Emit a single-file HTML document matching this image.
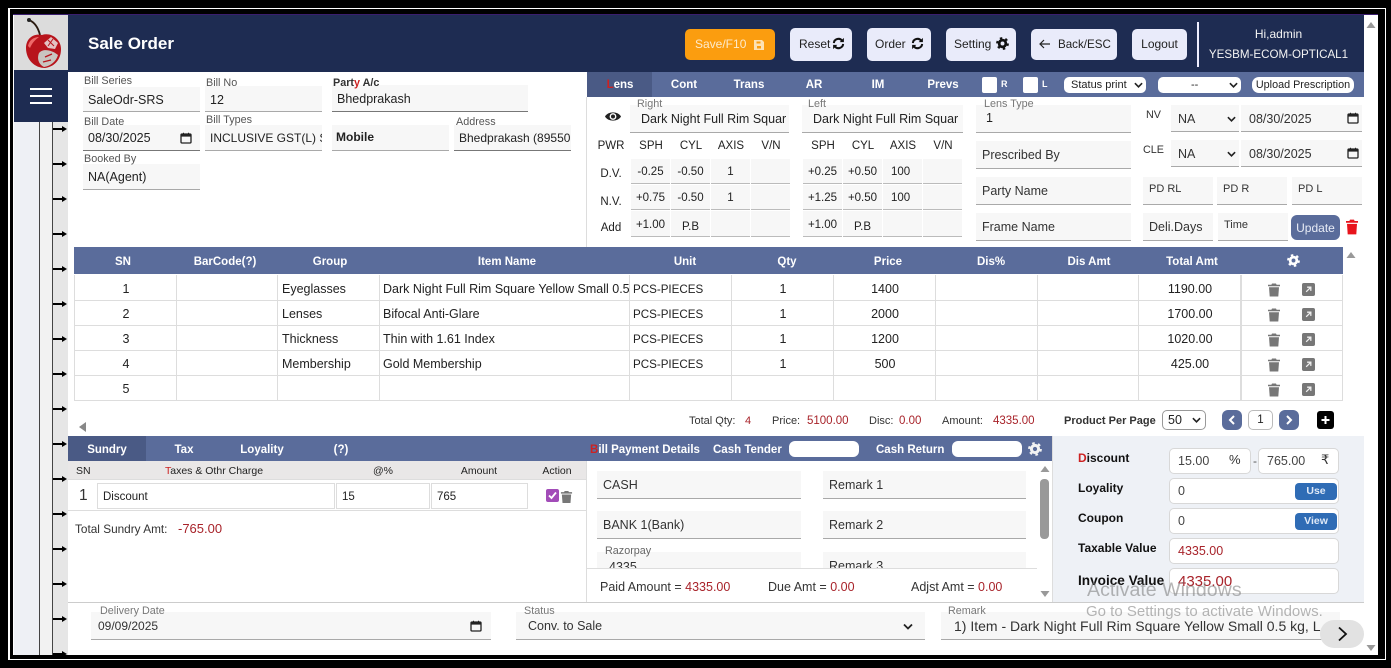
<!DOCTYPE html>
<html><head><meta charset="utf-8"><title>Sale Order</title>
<style>
html,body{margin:0;padding:0;background:#000;width:1391px;height:668px;overflow:hidden}
body{position:relative;font-family:"Liberation Sans",sans-serif;font-size:12.5px;color:#222}
div,span.a,svg.a{position:absolute}
.t{white-space:nowrap}
.f{background:#f7f7f7;border-bottom:1px solid #a9a9a9;box-sizing:border-box;white-space:nowrap;overflow:hidden;line-height:25px;padding-left:5px;padding-top:1px;font-size:12.5px;color:#222}
.l{font-size:10.8px;color:#555;white-space:nowrap;line-height:12px;z-index:2;margin-top:1px}
.h{color:#fff;font-weight:bold;font-size:11.5px;white-space:nowrap;line-height:14px;text-align:center;margin-top:1px}
.c{text-align:center;font-size:11.5px;white-space:nowrap;line-height:24px;padding-top:1px;background:#f7f7f7;border-bottom:1px solid #bbb;box-sizing:border-box}
.s{white-space:nowrap;font-size:11.5px;line-height:14px;text-align:center;color:#222;margin-top:1px}
.r{color:#a8232a}
.ar{left:53px;width:12px;height:2px;background:#000}
.ar:after{content:"";position:absolute;right:-2px;top:-2px;border-left:5px solid #000;border-top:3px solid transparent;border-bottom:3px solid transparent}
.btn{background:#e9ebfa;border-radius:5px;color:#222;font-size:12px;white-space:nowrap;text-align:center}
.td{font-size:12.5px;white-space:nowrap;line-height:25px;height:25px;overflow:hidden;margin-top:1px}
.ctr{text-align:center}
.vl{width:1px;background:#ddd;top:275px;height:125px}
.hl{height:1px;background:#ddd;left:74px;width:1269px}
.b{font-weight:bold;color:#111;font-size:12px;white-space:nowrap;line-height:14px}
.box{background:#fff;border:1px solid #d8d8d8;border-radius:5px;box-sizing:border-box;white-space:nowrap;padding-left:8px;font-size:12.5px;line-height:25px;color:#444}
.tq{font-size:11px;line-height:14px;color:#333;top:414px}
.sh{font-size:10.5px;line-height:13px;color:#222;top:465px;white-space:nowrap}
</style></head><body>
<svg width="0" height="0" style="position:absolute"><defs>
<symbol id="gear" viewBox="0 0 14 14"><circle cx="7" cy="7" r="3.6" fill="none" stroke="currentColor" stroke-width="3"/><circle cx="7" cy="7" r="5.8" fill="none" stroke="currentColor" stroke-width="2.2" stroke-dasharray="2.6 3.47"/></symbol>
<symbol id="trash" viewBox="0 0 14 14"><path fill="currentColor" d="M5 0.5h4l.6 1.2H13v1.6H1V1.700h3.400zM2 4.300h10l-.7 9.200H2.700z"/></symbol>
<symbol id="open" viewBox="0 0 14 14"><rect width="14" height="14" rx="2" fill="#777"/><path d="M4.500 9.500L9.500 4.500M5.500 4.500h4v4" fill="none" stroke="#eee" stroke-width="1.400"/></symbol>
<symbol id="sync" viewBox="0 0 14 14"><path d="M2 6.500A5 5 0 0 1 11 4M12 7.500A5 5 0 0 1 3 10" fill="none" stroke="currentColor" stroke-width="2.200"/><path fill="currentColor" d="M12.800 1v4.500H8.300zM1.200 13V8.500h4.500z"/></symbol>
<symbol id="cal" viewBox="0 0 12 12"><rect x="1" y="2" width="10" height="9" rx="1" fill="none" stroke="#222" stroke-width="1.300"/><rect x="1" y="2" width="10" height="2.600" fill="#222"/><path d="M3.500 .8v2M8.500 .8v2" stroke="#222"/></symbol>
<symbol id="chev" viewBox="0 0 10 6"><path d="M1 1l4 4 4-4" fill="none" stroke="#222" stroke-width="1.800"/></symbol>
</defs></svg>

<!-- outer frame -->
<div style="left:8px;top:8px;width:1375px;height:650px;border:1px solid #fff;border-left-width:2px;box-sizing:content-box"></div>
<div style="left:13px;top:14px;width:1365px;height:641px;background:#fff;overflow:hidden"></div>
<div style="left:13px;top:14px;width:1365px;height:1px;background:#3a1d6e"></div>

<!-- sidebar -->
<div style="left:14px;top:122px;width:25px;height:533px;background:#eef0f5"></div>
<div style="left:39px;top:122px;width:1px;height:533px;background:#444"></div>
<div style="left:40px;top:122px;width:12px;height:533px;background:#f2f2f2"></div>
<div style="left:52px;top:122px;width:1px;height:533px;background:#444"></div>
<div style="left:53px;top:122px;width:15px;height:533px;background:#e6e6e6"></div>
<div class="ar" style="top:128px"></div><div class="ar" style="top:163px"></div><div class="ar" style="top:198px"></div><div class="ar" style="top:233px"></div><div class="ar" style="top:268px"></div><div class="ar" style="top:303px"></div><div class="ar" style="top:338px"></div><div class="ar" style="top:373px"></div><div class="ar" style="top:408px"></div><div class="ar" style="top:443px"></div><div class="ar" style="top:478px"></div><div class="ar" style="top:513px"></div><div class="ar" style="top:548px"></div><div class="ar" style="top:583px"></div><div class="ar" style="top:618px"></div><div class="ar" style="top:653px"></div>

<!-- logo -->
<div style="left:14px;top:15px;width:54px;height:55px;background:#dcdcdc"></div>
<svg class="a" style="left:14px;top:15px" width="54" height="55" viewBox="0 0 54 55">
<path d="M15 5C20 7 24 12 26 20" fill="none" stroke="#2a1a10" stroke-width="1.800"/><circle cx="15" cy="5" r="2" fill="#222"/>
<path d="M12 33C12 23 20 18 28 20C37 17 47 24 47 34C47 46 39 52 31 53C21 53 12 45 12 33Z" fill="#b8141c"/>
<path d="M14 31C15 25 20 22 25 22C21 25 18 28 16 33Z" fill="#ee6a6a"/>
<path d="M25 38C29 33 38 35 44 40C42 47 36 51 30 52C24 49 23 43 25 38Z" fill="#c9c4c0"/>
<path d="M30 28L37 22L44 28L41 34L34 33Z" fill="#e3c2c2"/>
<path d="M34 25l6 6M39 24l-5 7" stroke="#b8141c" stroke-width="1"/>
<path d="M31 42l7-3M29 47l8-2" stroke="#b8141c" stroke-width="1.300"/>
</svg>
<!-- menu -->
<div style="left:14px;top:70px;width:54px;height:52px;background:#1e2c52"></div>
<div style="left:30px;top:88px;width:22px;height:2px;background:#fff"></div>
<div style="left:30px;top:95px;width:22px;height:2px;background:#fff"></div>
<div style="left:30px;top:102px;width:22px;height:2px;background:#fff"></div>

<!-- header -->
<div style="left:68px;top:15px;width:1296px;height:57px;background:#1e2c52"></div>
<div class="t" style="left:88px;top:34px;color:#fff;font-weight:bold;font-size:17px;line-height:20px">Sale Order</div>
<div class="btn" style="left:685px;top:29px;width:90px;height:31px;line-height:31px;background:#fb9d0f;color:#fdeacb;text-align:left;padding-left:10px;box-sizing:border-box">Save/F10</div>
<svg class="a" style="left:753px;top:39px" width="12" height="12" viewBox="0 0 12 12"><path fill="#fde2b5" d="M1 1h8l2 2v8H1zM3.500 2.500v2h4v-2zM4 7v2.500h4V7z"/></svg>
<div class="btn" style="left:790px;top:28px;width:62px;height:33px;line-height:33px;text-align:left;padding-left:9px;box-sizing:border-box">Reset</div>
<svg class="a" style="left:832px;top:37px;color:#111" width="13" height="13"><use href="#sync"/></svg>
<div class="btn" style="left:867px;top:28px;width:64px;height:33px;line-height:33px;text-align:left;padding-left:8px;box-sizing:border-box">Order</div>
<svg class="a" style="left:911px;top:37px;color:#111" width="13" height="13"><use href="#sync"/></svg>
<div class="btn" style="left:946px;top:28px;width:70px;height:33px;line-height:33px;text-align:left;padding-left:8px;box-sizing:border-box">Setting</div>
<svg class="a" style="left:996px;top:37px;color:#111" width="13" height="13"><use href="#gear"/></svg>
<div class="btn" style="left:1031px;top:29px;width:86px;height:31px;line-height:31px;text-align:left;padding-left:27px;box-sizing:border-box;font-size:11.6px">Back/ESC</div>
<svg class="a" style="left:1038px;top:39px" width="13" height="10" viewBox="0 0 13 10"><path d="M12 5H2M6 1L2 5l4 4" fill="none" stroke="#222" stroke-width="1.200"/></svg>
<div class="btn" style="left:1132px;top:29px;width:55px;height:31px;line-height:31px">Logout</div>
<div style="left:1197px;top:22px;width:2px;height:45px;background:#eef"></div>
<div class="t" style="left:1196px;top:27px;width:165px;text-align:center;color:#f3f3f3;font-size:12px;line-height:14px">Hi,admin</div>
<div class="t" style="left:1196px;top:48px;width:165px;text-align:center;color:#f3f3f3;font-size:11.6px;line-height:14px">YESBM-ECOM-OPTICAL1</div>
<svg class="a" style="left:1366px;top:21px" width="10" height="8"><path d="M5 1L9.500 7H.5z" fill="#999"/></svg>
<svg class="a" style="left:1366px;top:644px" width="10" height="8"><path d="M5 7L9.500 1H.5z" fill="#999"/></svg>

<!-- left top fields -->
<div class="l" style="left:84px;top:74px">Bill Series</div>
<div class="f" style="left:83px;top:87px;width:117px;height:25px">SaleOdr-SRS</div>
<div class="l" style="left:206px;top:76px">Bill No</div>
<div class="f" style="left:205px;top:86px;width:117px;height:26px;line-height:26px">12</div>
<div class="l" style="left:333px;top:76px;font-weight:bold;color:#333">Part<span style="color:#c22">y</span> A/c</div>
<div class="f" style="left:332px;top:85px;width:196px;height:27px;border-bottom-color:#777;line-height:26px">Bhedprakash</div>
<div class="l" style="left:84px;top:115px">Bill Date</div>
<div class="f" style="left:83px;top:125px;width:117px;height:26px;border-bottom-color:#777">08/30/2025</div>
<svg class="a" style="left:180px;top:132px" width="12" height="12"><use href="#cal"/></svg>
<div class="l" style="left:206px;top:113px">Bill Types</div>
<div class="f" style="left:205px;top:125px;width:117px;height:26px;padding-right:4px;font-size:12px">INCLUSIVE GST(L) S</div>
<div class="f" style="left:332px;top:125px;width:117px;height:26px;font-weight:bold;font-size:12px;padding-left:4px;padding-top:0">Mobile</div>
<div class="l" style="left:456px;top:115px">Address</div>
<div class="f" style="left:454px;top:125px;width:117px;height:26px;border-bottom-color:#777;font-size:12px;padding-right:5px">Bhedprakash (89550</div>
<div class="l" style="left:84px;top:152px">Booked By</div>
<div class="f" style="left:83px;top:164px;width:117px;height:26px">NA(Agent)</div>

<!-- lens panel -->
<div style="left:587px;top:72px;width:777px;height:25px;background:#5a6c9b"></div>
<div style="left:587px;top:72px;width:65px;height:25px;background:#4a5a85"></div>
<div style="left:586px;top:97px;width:1px;height:150px;background:#ddd"></div>
<div class="h" style="left:600px;top:77px;width:40px"><span style="color:#c22">L</span>ens</div>
<div class="h" style="left:664px;top:77px;width:40px">Cont</div>
<div class="h" style="left:729px;top:77px;width:40px">Trans</div>
<div class="h" style="left:794px;top:77px;width:40px">AR</div>
<div class="h" style="left:858px;top:77px;width:40px">IM</div>
<div class="h" style="left:923px;top:77px;width:40px">Prevs</div>
<div style="left:982px;top:77px;width:15px;height:16px;background:#fff;border-radius:2px"></div>
<div class="h" style="left:1001px;top:76px;font-size:9px">R</div>
<div style="left:1023px;top:77px;width:15px;height:16px;background:#fff;border-radius:2px"></div>
<div class="h" style="left:1042px;top:76px;font-size:9px">L</div>
<div style="left:1064px;top:77px;width:82px;height:16px;background:#fff;border-radius:5px"></div>
<div class="t" style="left:1071px;top:78px;font-size:11px;line-height:14px">Status print</div>
<svg class="a" style="left:1134px;top:82px" width="9" height="6"><use href="#chev"/></svg>
<div style="left:1158px;top:77px;width:83px;height:16px;background:#fff;border-radius:5px"></div>
<div class="t" style="left:1191px;top:78px;font-size:11px;line-height:14px">--</div>
<svg class="a" style="left:1229px;top:82px" width="9" height="6"><use href="#chev"/></svg>
<div class="t" style="left:1252px;top:77px;width:102px;height:16px;background:#fff;border-radius:7px;font-size:10.8px;line-height:16px;text-align:center">Upload Prescription</div>

<svg class="a" style="left:604px;top:109px" width="18" height="15" viewBox="0 0 18 15"><path d="M1 7.500C4 2 14 2 17 7.500C14 13 4 13 1 7.500Z" fill="#222"/><circle cx="9" cy="7.500" r="3.400" fill="#fff"/><circle cx="9" cy="7.500" r="2" fill="#222"/></svg>
<div class="l" style="left:637px;top:97px;color:#777">Right</div>
<div class="f" style="left:630px;top:105px;width:159px;height:28px;line-height:26px;padding-left:11px;background:#f8f8f8">Dark Night Full Rim Squar</div>
<div class="l" style="left:808px;top:97px;color:#777">Left</div>
<div class="f" style="left:802px;top:105px;width:161px;height:28px;line-height:26px;padding-left:11px;background:#f8f8f8">Dark Night Full Rim Squar</div>

<div class="s" style="left:591px;top:138px;width:40px">PWR</div>
<div class="s" style="left:631px;top:138px;width:40px">SPH</div>
<div class="s" style="left:671px;top:138px;width:40px">CYL</div>
<div class="s" style="left:711px;top:138px;width:40px">AXIS</div>
<div class="s" style="left:751px;top:138px;width:40px">V/N</div>
<div class="s" style="left:803px;top:138px;width:40px">SPH</div>
<div class="s" style="left:843px;top:138px;width:40px">CYL</div>
<div class="s" style="left:883px;top:138px;width:40px">AXIS</div>
<div class="s" style="left:923px;top:138px;width:40px">V/N</div>
<div class="s" style="left:591px;top:166px;width:40px">D.V.</div>
<div class="s" style="left:591px;top:194px;width:40px">N.V.</div>
<div class="s" style="left:591px;top:220px;width:40px">Add</div>

<div class="c" style="left:631px;top:159px;width:39px;height:25px">-0.25</div>
<div class="c" style="left:671px;top:159px;width:39px;height:25px">-0.50</div>
<div class="c" style="left:711px;top:159px;width:39px;height:25px">1</div>
<div class="c" style="left:751px;top:159px;width:39px;height:25px"></div>
<div class="c" style="left:631px;top:185px;width:39px;height:25px">+0.75</div>
<div class="c" style="left:671px;top:185px;width:39px;height:25px">-0.50</div>
<div class="c" style="left:711px;top:185px;width:39px;height:25px">1</div>
<div class="c" style="left:751px;top:185px;width:39px;height:25px"></div>
<div class="c" style="left:631px;top:211px;width:39px;height:26px;line-height:26px">+1.00</div>
<div class="c" style="left:671px;top:211px;width:39px;height:26px;line-height:30px">P.B</div>
<div class="c" style="left:711px;top:211px;width:39px;height:26px"></div>
<div class="c" style="left:751px;top:211px;width:39px;height:26px"></div>
<div class="c" style="left:803px;top:159px;width:39px;height:25px">+0.25</div>
<div class="c" style="left:843px;top:159px;width:39px;height:25px">+0.50</div>
<div class="c" style="left:883px;top:159px;width:39px;height:25px;text-align:left;padding-left:8px">100</div>
<div class="c" style="left:923px;top:159px;width:39px;height:25px"></div>
<div class="c" style="left:803px;top:185px;width:39px;height:25px">+1.25</div>
<div class="c" style="left:843px;top:185px;width:39px;height:25px">+0.50</div>
<div class="c" style="left:883px;top:185px;width:39px;height:25px;text-align:left;padding-left:8px">100</div>
<div class="c" style="left:923px;top:185px;width:39px;height:25px"></div>
<div class="c" style="left:803px;top:211px;width:39px;height:26px;line-height:26px">+1.00</div>
<div class="c" style="left:843px;top:211px;width:39px;height:26px;line-height:30px">P.B</div>
<div class="c" style="left:883px;top:211px;width:39px;height:26px"></div>
<div class="c" style="left:923px;top:211px;width:39px;height:26px"></div>

<div class="l" style="left:984px;top:97px;color:#777">Lens Type</div>
<div class="f" style="left:976px;top:105px;width:155px;height:28px;line-height:25px;padding-left:10px">1</div>
<div class="f" style="left:976px;top:141px;width:155px;height:28px;line-height:27px;padding-left:6px;color:#333">Prescribed By</div>
<div class="f" style="left:976px;top:177px;width:155px;height:28px;line-height:27px;padding-left:6px;color:#333">Party Name</div>
<div class="f" style="left:976px;top:213px;width:155px;height:28px;line-height:27px;padding-left:6px;color:#333">Frame Name</div>
<div class="l" style="left:1146px;top:108px;color:#333">NV</div>
<div class="l" style="left:1143px;top:143px;color:#333">CLE</div>
<div class="f" style="left:1171px;top:105px;width:68px;height:27px;padding-left:7px;line-height:26px;color:#333">NA</div>
<svg class="a" style="left:1227px;top:116px" width="9" height="6"><use href="#chev"/></svg>
<div class="f" style="left:1241px;top:105px;width:121px;height:27px;padding-left:8px;line-height:26px;color:#333">08/30/2025</div>
<svg class="a" style="left:1347px;top:112px" width="12" height="12"><use href="#cal"/></svg>
<div class="f" style="left:1171px;top:140px;width:68px;height:27px;padding-left:7px;line-height:26px;color:#333">NA</div>
<svg class="a" style="left:1227px;top:151px" width="9" height="6"><use href="#chev"/></svg>
<div class="f" style="left:1241px;top:140px;width:121px;height:27px;padding-left:8px;line-height:26px;color:#333">08/30/2025</div>
<svg class="a" style="left:1347px;top:147px" width="12" height="12"><use href="#cal"/></svg>
<div class="f" style="left:1143px;top:177px;width:70px;height:28px;font-size:11px;line-height:23px;padding-left:6px;color:#333">PD RL</div>
<div class="f" style="left:1217px;top:177px;width:70px;height:28px;font-size:11px;line-height:23px;padding-left:6px;color:#333">PD R</div>
<div class="f" style="left:1292px;top:177px;width:70px;height:28px;font-size:11px;line-height:23px;padding-left:6px;color:#333">PD L</div>
<div class="f" style="left:1143px;top:213px;width:70px;height:28px;line-height:27px;padding-left:6px;color:#333">Deli.Days</div>
<div class="f" style="left:1218px;top:213px;width:70px;height:28px;font-size:11px;line-height:23px;padding-left:6px;color:#333">Time</div>
<div class="t" style="left:1291px;top:215px;width:49px;height:25px;background:#5a6c9b;border-radius:6px;color:#e8ecf6;font-size:12px;line-height:26px;text-align:center">Update</div>
<svg class="a" style="left:1345px;top:219px;color:#e8141c" width="14" height="16" viewBox="0 0 14 14" preserveAspectRatio="none"><use href="#trash"/></svg>

<!-- table -->
<div style="left:74px;top:247px;width:1269px;height:27px;background:#5a6c9b"></div>
<div class="h" style="left:83px;top:254px;width:80px">SN</div>
<div class="h" style="left:185px;top:254px;width:80px">BarCode(?)</div>
<div class="h" style="left:290px;top:254px;width:80px">Group</div>
<div class="h" style="left:467px;top:254px;width:80px">Item Name</div>
<div class="h" style="left:645px;top:254px;width:80px">Unit</div>
<div class="h" style="left:747px;top:254px;width:80px">Qty</div>
<div class="h" style="left:848px;top:254px;width:80px">Price</div>
<div class="h" style="left:951px;top:254px;width:80px">Dis%</div>
<div class="h" style="left:1049px;top:254px;width:80px">Dis Amt</div>
<div class="h" style="left:1152px;top:254px;width:80px">Total Amt</div>
<svg class="a" style="left:1287px;top:254px;color:#fff" width="13" height="13"><use href="#gear"/></svg>
<svg class="a" style="left:1346px;top:251px" width="10" height="8"><path d="M5 1L9.500 7H.5z" fill="#999"/></svg>

<div class="hl" style="top:300px"></div><div class="hl" style="top:325px"></div><div class="hl" style="top:350px"></div><div class="hl" style="top:375px"></div><div class="hl" style="top:400px"></div>
<div class="vl" style="left:74px"></div><div class="vl" style="left:176px"></div><div class="vl" style="left:277px"></div><div class="vl" style="left:379px"></div><div class="vl" style="left:629px"></div><div class="vl" style="left:731px"></div><div class="vl" style="left:833px"></div><div class="vl" style="left:935px"></div><div class="vl" style="left:1037px"></div><div class="vl" style="left:1138px"></div><div class="vl" style="left:1240px;width:2px"></div><div class="vl" style="left:1342px"></div>

<div class="td ctr" style="left:86px;top:276px;width:80px">1</div>
<div class="td ctr" style="left:86px;top:301px;width:80px">2</div>
<div class="td ctr" style="left:86px;top:326px;width:80px">3</div>
<div class="td ctr" style="left:86px;top:351px;width:80px">4</div>
<div class="td ctr" style="left:86px;top:376px;width:80px">5</div>
<div class="td" style="left:282px;top:276px">Eyeglasses</div>
<div class="td" style="left:282px;top:301px">Lenses</div>
<div class="td" style="left:282px;top:326px">Thickness</div>
<div class="td" style="left:282px;top:351px">Membership</div>
<div class="td" style="left:383px;top:276px;width:246px">Dark Night Full Rim Square Yellow Small 0.5 kg</div>
<div class="td" style="left:383px;top:301px">Bifocal Anti-Glare</div>
<div class="td" style="left:383px;top:326px">Thin with 1.61 Index</div>
<div class="td" style="left:383px;top:351px">Gold Membership</div>
<div class="td" style="left:633px;top:276px;font-size:11.6px">PCS-PIECES</div>
<div class="td" style="left:633px;top:301px;font-size:11.6px">PCS-PIECES</div>
<div class="td" style="left:633px;top:326px;font-size:11.6px">PCS-PIECES</div>
<div class="td" style="left:633px;top:351px;font-size:11.6px">PCS-PIECES</div>
<div class="td ctr" style="left:763px;top:276px;width:40px">1</div>
<div class="td ctr" style="left:763px;top:301px;width:40px">1</div>
<div class="td ctr" style="left:763px;top:326px;width:40px">1</div>
<div class="td ctr" style="left:763px;top:351px;width:40px">1</div>
<div class="td ctr" style="left:860px;top:276px;width:50px">1400</div>
<div class="td ctr" style="left:860px;top:301px;width:50px">2000</div>
<div class="td ctr" style="left:860px;top:326px;width:50px">1200</div>
<div class="td ctr" style="left:860px;top:351px;width:50px">500</div>
<div class="td ctr" style="left:1160px;top:276px;width:60px">1190.00</div>
<div class="td ctr" style="left:1160px;top:301px;width:60px">1700.00</div>
<div class="td ctr" style="left:1160px;top:326px;width:60px">1020.00</div>
<div class="td ctr" style="left:1160px;top:351px;width:60px">425.00</div>

<svg class="a" style="left:1267px;top:283px;color:#777" width="14" height="14"><use href="#trash"/></svg>
<svg class="a" style="left:1267px;top:308px;color:#777" width="14" height="14"><use href="#trash"/></svg>
<svg class="a" style="left:1267px;top:333px;color:#777" width="14" height="14"><use href="#trash"/></svg>
<svg class="a" style="left:1267px;top:358px;color:#777" width="14" height="14"><use href="#trash"/></svg>
<svg class="a" style="left:1267px;top:383px;color:#777" width="14" height="14"><use href="#trash"/></svg>
<svg class="a" style="left:1302px;top:283px" width="13" height="13"><use href="#open"/></svg>
<svg class="a" style="left:1302px;top:308px" width="13" height="13"><use href="#open"/></svg>
<svg class="a" style="left:1302px;top:333px" width="13" height="13"><use href="#open"/></svg>
<svg class="a" style="left:1302px;top:358px" width="13" height="13"><use href="#open"/></svg>
<svg class="a" style="left:1302px;top:383px" width="13" height="13"><use href="#open"/></svg>

<svg class="a" style="left:78px;top:422px" width="8" height="10"><path d="M1 5L8 0V10z" fill="#888"/></svg>

<!-- totals -->
<div class="t tq" style="left:689px">Total Qty:</div><div class="t r tq" style="left:745px;color:#a8232a">4</div>
<div class="t tq" style="left:772px">Price:</div><div class="t r tq" style="left:807px;font-size:11.5px;color:#a8232a">5100.00</div>
<div class="t tq" style="left:869px">Disc:</div><div class="t r tq" style="left:899px;font-size:11.5px;color:#a8232a">0.00</div>
<div class="t tq" style="left:942px">Amount:</div><div class="t r tq" style="left:993px;font-size:11.5px;color:#a8232a">4335.00</div>
<div class="t tq" style="left:1064px;font-weight:bold">Product Per Page</div>
<div class="t" style="left:1162px;top:410px;width:44px;height:20px;box-sizing:border-box;border:1px solid #999;border-radius:5px;font-size:12.5px;line-height:18px;padding-left:5px">50</div>
<svg class="a" style="left:1192px;top:417px" width="9" height="6"><use href="#chev"/></svg>
<div style="left:1222px;top:410px;width:20px;height:20px;background:#5a6c9b;border-radius:6px"></div>
<svg class="a" style="left:1228px;top:415px" width="8" height="10" viewBox="0 0 8 10"><path d="M6 1L2 5l4 4" fill="none" stroke="#fff" stroke-width="2"/></svg>
<div class="t" style="left:1248px;top:410px;width:25px;height:20px;box-sizing:border-box;border:1px solid #bbb;border-radius:5px;font-size:11.5px;line-height:18px;text-align:center">1</div>
<div style="left:1279px;top:410px;width:20px;height:20px;background:#5a6c9b;border-radius:6px"></div>
<svg class="a" style="left:1285px;top:415px" width="8" height="10" viewBox="0 0 8 10"><path d="M2 1l4 4-4 4" fill="none" stroke="#fff" stroke-width="2"/></svg>
<div style="left:1317px;top:411px;width:17px;height:18px;background:#000;border-radius:3px"></div>
<svg class="a" style="left:1321px;top:415px" width="9" height="10"><path d="M4.500 1v8M.5 5h8" stroke="#fff" stroke-width="2"/></svg>

<!-- sundry -->
<div style="left:68px;top:436px;width:518px;height:25px;background:#5a6c9b"></div>
<div style="left:68px;top:436px;width:78px;height:25px;background:#4a5a85"></div>
<div class="h" style="left:67px;top:442px;width:80px">Sundry</div>
<div class="h" style="left:144px;top:442px;width:80px">Tax</div>
<div class="h" style="left:222px;top:442px;width:80px">Loyality</div>
<div class="h" style="left:301px;top:442px;width:80px">(?)</div>
<div style="left:68px;top:461px;width:518px;height:19px;background:#e9e7e7;border-bottom:1px solid #ddd;box-sizing:border-box"></div>
<div class="sh" style="left:76px">SN</div>
<div class="sh" style="left:165px"><span style="color:#c22">T</span>axes &amp; Othr Charge</div>
<div class="sh" style="left:353px;width:60px;text-align:center">@%</div>
<div class="sh" style="left:449px;width:60px;text-align:center">Amount</div>
<div class="sh" style="left:527px;width:60px;text-align:center">Action</div>
<div style="left:68px;top:510px;width:518px;height:1px;background:#ddd"></div>
<div class="t" style="left:79px;top:486px;font-size:15.5px;line-height:20px;color:#333">1</div>
<div class="t" style="left:97px;top:483px;width:238px;height:26px;box-sizing:border-box;border:1px solid #ddd;padding-left:5px;font-size:11.5px;line-height:27px">Discount</div>
<div class="t" style="left:336px;top:483px;width:94px;height:26px;box-sizing:border-box;border:1px solid #ddd;padding-left:5px;font-size:11.5px;line-height:27px">15</div>
<div class="t" style="left:431px;top:483px;width:97px;height:26px;box-sizing:border-box;border:1px solid #ddd;padding-left:5px;font-size:11.5px;line-height:27px">765</div>
<div style="left:546px;top:489px;width:13px;height:13px;background:#a24cb8;border-radius:2px"></div>
<svg class="a" style="left:547px;top:490px" width="11" height="11"><path d="M2 5.500l2.500 2.500L9 2.500" fill="none" stroke="#fff" stroke-width="1.800"/></svg>
<svg class="a" style="left:560px;top:490px;color:#777" width="13" height="14"><use href="#trash"/></svg>
<div class="t" style="left:75px;top:522px;font-size:11.8px;line-height:14px;color:#333">Total Sundry Amt:</div>
<div class="t r" style="left:178px;top:522px;font-size:13px;line-height:14px">-765.00</div>

<!-- payment -->
<div style="left:586px;top:436px;width:466px;height:25px;background:#5a6c9b"></div>
<div class="t h" style="left:590px;top:442px"><span style="color:#c22">B</span>ill Payment Details</div>
<div class="t h" style="left:713px;top:442px">Cash Tender</div>
<div style="left:789px;top:441px;width:70px;height:16px;background:#fff;border-radius:6px"></div>
<div class="t h" style="left:876px;top:442px">Cash Return</div>
<div style="left:952px;top:441px;width:70px;height:16px;background:#fff;border-radius:6px"></div>
<svg class="a" style="left:1028px;top:442px;color:#f2f2f2" width="14" height="14"><use href="#gear"/></svg>
<div style="left:586px;top:461px;width:1px;height:141px;background:#ddd"></div>
<div class="f" style="left:597px;top:471px;width:204px;height:28px;line-height:27px;padding-left:6px;color:#333">CASH</div>
<div class="f" style="left:823px;top:471px;width:203px;height:28px;line-height:27px;padding-left:6px;color:#333">Remark 1</div>
<div class="f" style="left:597px;top:511px;width:204px;height:28px;line-height:27px;padding-left:6px;color:#333">BANK 1(Bank)</div>
<div class="f" style="left:823px;top:511px;width:203px;height:28px;line-height:27px;padding-left:6px;color:#333">Remark 2</div>
<div class="l" style="left:605px;top:544px;color:#666">Razorpay</div>
<div class="f" style="left:597px;top:552px;width:204px;height:16px;border:0;line-height:28px;padding-left:12px;color:#333">4335</div>
<div class="f" style="left:823px;top:552px;width:203px;height:16px;border:0;line-height:26px;padding-left:6px;color:#333">Remark 3</div>
<div style="left:586px;top:568px;width:451px;height:1px;background:#ddd"></div>
<div class="t" style="left:600px;top:580px;font-size:12.5px;line-height:15px;color:#333">Paid Amount = <span class="r">4335.00</span></div>
<div class="t" style="left:768px;top:580px;font-size:12.5px;line-height:15px;color:#333">Due Amt = <span class="r">0.00</span></div>
<div class="t" style="left:911px;top:580px;font-size:12.5px;line-height:15px;color:#333">Adjst Amt = <span class="r">0.00</span></div>
<svg class="a" style="left:1040px;top:465px" width="10" height="8"><path d="M5 1L9.500 7H.5z" fill="#999"/></svg>
<div style="left:1040px;top:479px;width:9px;height:60px;background:#999;border-radius:4px"></div>
<svg class="a" style="left:1040px;top:590px" width="10" height="8"><path d="M5 7L9.500 1H.5z" fill="#999"/></svg>

<!-- right summary -->
<div style="left:1052px;top:436px;width:312px;height:166px;background:#eef1f6;border-left:1px solid #ddd;box-sizing:border-box"></div>
<div class="b" style="left:1078px;top:451px"><span style="color:#c22">D</span>iscount</div>
<div class="b" style="left:1078px;top:481px">Loyality</div>
<div class="b" style="left:1078px;top:511px">Coupon</div>
<div class="b" style="left:1078px;top:541px">Taxable Value</div>
<div class="b" style="left:1078px;top:574px;font-size:13.6px">Invoice Value</div>
<div class="box" style="left:1169px;top:448px;width:82px;height:26px">15.00</div>
<div class="t" style="left:1229px;top:452px;font-size:13px;line-height:16px;color:#333">%</div>
<div class="t" style="left:1253px;top:453px;font-size:12px;line-height:16px;color:#555">-</div>
<div class="box" style="left:1258px;top:448px;width:81px;height:26px">765.00</div>
<div class="t" style="left:1321px;top:452px;font-size:13px;line-height:16px;color:#333">&#8377;</div>
<div class="box" style="left:1169px;top:478px;width:170px;height:26px">0</div>
<div class="t" style="left:1295px;top:483px;width:42px;height:17px;background:#2f6cb5;border-radius:4px;color:#dfe9f7;font-weight:bold;font-size:10.5px;line-height:17px;text-align:center">Use</div>
<div class="box" style="left:1169px;top:508px;width:170px;height:26px">0</div>
<div class="t" style="left:1295px;top:513px;width:42px;height:17px;background:#2f6cb5;border-radius:4px;color:#dfe9f7;font-weight:bold;font-size:10.5px;line-height:17px;text-align:center">View</div>
<div class="box" style="left:1169px;top:538px;width:170px;height:26px;color:#a8232a">4335.00</div>
<div class="box" style="left:1169px;top:568px;width:170px;height:26px;color:#a8232a;font-size:15px;line-height:26px">4335.00</div>

<!-- bottom -->
<div style="left:68px;top:602px;width:1296px;height:1px;background:#ccc"></div>
<div class="l" style="left:100px;top:604px;color:#777">Delivery Date</div>
<div class="f" style="left:91px;top:612px;width:400px;height:28px;line-height:27px;padding-left:7px;font-size:12px;color:#333">09/09/2025</div>
<svg class="a" style="left:470px;top:620px" width="12" height="12"><use href="#cal"/></svg>
<div class="l" style="left:524px;top:604px;color:#777">Status</div>
<div class="f" style="left:516px;top:612px;width:409px;height:28px;line-height:27px;padding-left:12px;color:#333">Conv. to Sale</div>
<svg class="a" style="left:903px;top:623px" width="10" height="7"><use href="#chev"/></svg>
<div class="l" style="left:948px;top:604px;color:#777">Remark</div>
<div class="f" style="left:941px;top:612px;width:399px;height:28px;line-height:27px;padding-left:13px;font-size:14px;color:#333">1) Item - Dark Night Full Rim Square Yellow Small 0.5 kg, L</div>
<div style="left:1320px;top:620px;width:44px;height:28px;background:#e2e2e2;border-radius:14px"></div>
<svg class="a" style="left:1337px;top:626px" width="12" height="16" viewBox="0 0 12 16"><path d="M2 1.500L9 8l-7 6.500" fill="none" stroke="#111" stroke-width="1.800"/></svg>

<!-- watermark -->
<div class="t" style="left:1087px;top:579px;font-size:19.6px;line-height:22px;color:rgba(120,120,120,.55);z-index:3">Activate Windows</div>
<div class="t" style="left:1086px;top:604px;font-size:15px;line-height:16px;color:rgba(120,120,120,.55);z-index:3">Go to Settings to activate Windows.</div>
</body></html>
